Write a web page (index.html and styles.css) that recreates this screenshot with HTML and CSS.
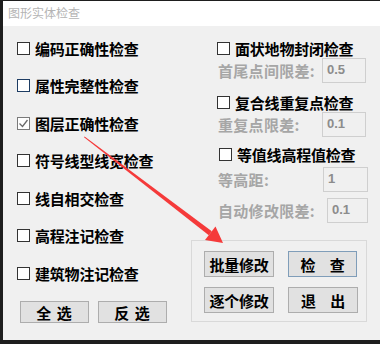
FILE: index.html
```html
<!DOCTYPE html>
<html lang="zh-CN">
<head>
    <meta charset="UTF-8">
    <title>图形实体检查</title>
    <link rel="stylesheet" href="styles.css">
</head>
<body>
    <div class="window">
        <div class="titlebar">图形实体检查</div>
        <div class="content">
            <div class="left-col">
                <div class="check-list">
                    <label class="check-row"><span class="box"></span>编码正确性检查</label>
                    <label class="check-row"><span class="box hover"></span>属性完整性检查</label>
                    <label class="check-row"><span class="box checked"><svg width="11" height="11" viewBox="0 0 11 11"><polyline points="1.5,5.5 4.5,8.5 9.5,2" fill="none" stroke="#6a6a6a" stroke-width="1.3"/></svg></span>图层正确性检查</label>
                    <label class="check-row"><span class="box"></span>符号线型线宽检查</label>
                    <label class="check-row"><span class="box"></span>线自相交检查</label>
                    <label class="check-row"><span class="box"></span>高程注记检查</label>
                    <label class="check-row"><span class="box"></span>建筑物注记检查</label>
                </div>
                <div class="select-buttons">
                    <button class="btn small">全 选</button>
                    <button class="btn small">反 选</button>
                </div>
            </div>

            <div class="right-col">
                <label class="check-row"><span class="box"></span>面状地物封闭检查</label>
                <div class="field-row">
                    <span class="field-label">首尾点间限差:</span>
                    <span class="field">0.5</span>
                </div>
                <label class="check-row second"><span class="box"></span>复合线重复点检查</label>
                <div class="field-row">
                    <span class="field-label">重复点限差:</span>
                    <span class="field">0.1</span>
                </div>
                <label class="check-row third"><span class="box"></span>等值线高程值检查</label>
                <div class="field-row gap-small">
                    <span class="field-label">等高距:</span>
                    <span class="field wide">1</span>
                </div>
                <div class="field-row gap-mid">
                    <span class="field-label">自动修改限差:</span>
                    <span class="field narrow">0.1</span>
                </div>

                <div class="group-box">
                    <button class="btn">批量修改</button>
                    <button class="btn focused">检　查</button>
                    <button class="btn">逐个修改</button>
                    <button class="btn">退　出</button>
                </div>
            </div>
        </div>
    </div>

    <svg class="arrow" width="380" height="344" viewBox="0 0 380 344">
        <polygon points="84,137.3 84.6,136.5 211.8,231.3 208.8,235.3" fill="#f53a3a"/>
        <polygon points="223,243 205,240 215.5,226.5" fill="#f53a3a"/>
    </svg>
</body>
</html>
```

FILE: styles.css
```css
body {
    margin: 0;
    background-color: #f0f0f0;
    font-family: "Noto Sans CJK SC", "Liberation Sans", sans-serif;
    position: relative;
    width: 380px;
    height: 344px;
    overflow: hidden;
}
.window {
    height: 344px;
    box-sizing: border-box;
    border-top: 1px solid #1e1e1e;
    border-left: 3px solid #1e1e1e;
    border-bottom: 4px solid #1e1e1e;
    display: flex;
    flex-direction: column;
}
.titlebar {
    height: 25px;
    line-height: 24px;
    background-color: #ffffff;
    color: #b4b4b4; /* inactive title */
    font-size: 12px;
    padding-left: 5px;
}
.content {
    flex: 1;
    display: flex;
    background-color: #f0f0f0;
}
.left-col {
    width: 188px;
    box-sizing: border-box;
    padding: 12px 0 0 14px;
}
.check-list {
    display: flex;
    flex-direction: column;
    gap: 17.6px;
}
.check-row {
    display: flex;
    align-items: center;
    height: 20px;
    font-size: 15px;
    font-weight: bold;
    letter-spacing: -0.2px;
    color: #000;
    white-space: nowrap;
}
.box {
    width: 11px;
    height: 11px;
    border: 1px solid #333;
    background-color: #fff;
    margin-right: 5px;
    flex-shrink: 0;
    display: flex;
}
.box.hover {
    border-color: #1d3c63;
}
.box.checked {
    border-color: #7a7a7a;
}
.select-buttons {
    display: flex;
    gap: 9px;
    margin: 17px 0 0 3px;
}
.btn {
    height: 26px;
    width: 70px;
    padding: 0;
    background-color: #e1e1e1;
    border: 1px solid #adadad;
    font-family: "Noto Sans CJK SC", sans-serif;
    font-size: 15px;
    font-weight: bold;
    letter-spacing: -0.3px;
    color: #000;
    white-space: pre;
}
.btn.small {
    height: 22px;
    width: 69px;
    letter-spacing: 1px;
}
.btn.focused {
    border-color: #7f9db9;
    width: 69px;
}
.right-col {
    width: 176px;
    padding-top: 12px;
    display: flex;
    flex-direction: column;
}
.right-col .check-row {
    padding-left: 26px;
}
.right-col .check-row.second {
    margin-top: 9px;
}
.right-col .check-row.third {
    margin-top: 7px;
    padding-left: 28px;
}
.field-row {
    display: flex;
    align-items: center;
    height: 25px;
    padding-left: 27px;
}
.field-row.gap-small {
    margin-top: 3px;
}
.field-row.gap-mid {
    margin-top: 6px;
}
.field-label {
    font-size: 15px;
    font-weight: bold;
    letter-spacing: 0.3px;
    color: #a6a6a6;
    white-space: nowrap;
}
.field {
    margin-left: auto;
    width: 44px;
    height: 25px;
    box-sizing: border-box;
    border: 1px solid #cfcfcf;
    background-color: #f0f0f0;
    color: #8c8c8c;
    font-family: "Liberation Sans", sans-serif;
    font-weight: bold;
    font-size: 13px;
    line-height: 21px;
    padding-left: 4px;
    margin-right: 1px;
}
.field.wide {
    width: 45px;
    margin-right: -1px;
}
.field.narrow {
    width: 41px;
    margin-right: -1px;
}
.group-box {
    margin-top: 17px;
    height: 82px;
    box-sizing: border-box;
    border: 1px solid #d9d9d9;
    padding: 10px 0 0 12px;
    display: grid;
    grid-template-columns: 70px 69px;
    grid-auto-rows: 26px;
    column-gap: 14px;
    row-gap: 10px;
}
.arrow {
    position: absolute;
    left: 0;
    top: 0;
    pointer-events: none;
}
```
